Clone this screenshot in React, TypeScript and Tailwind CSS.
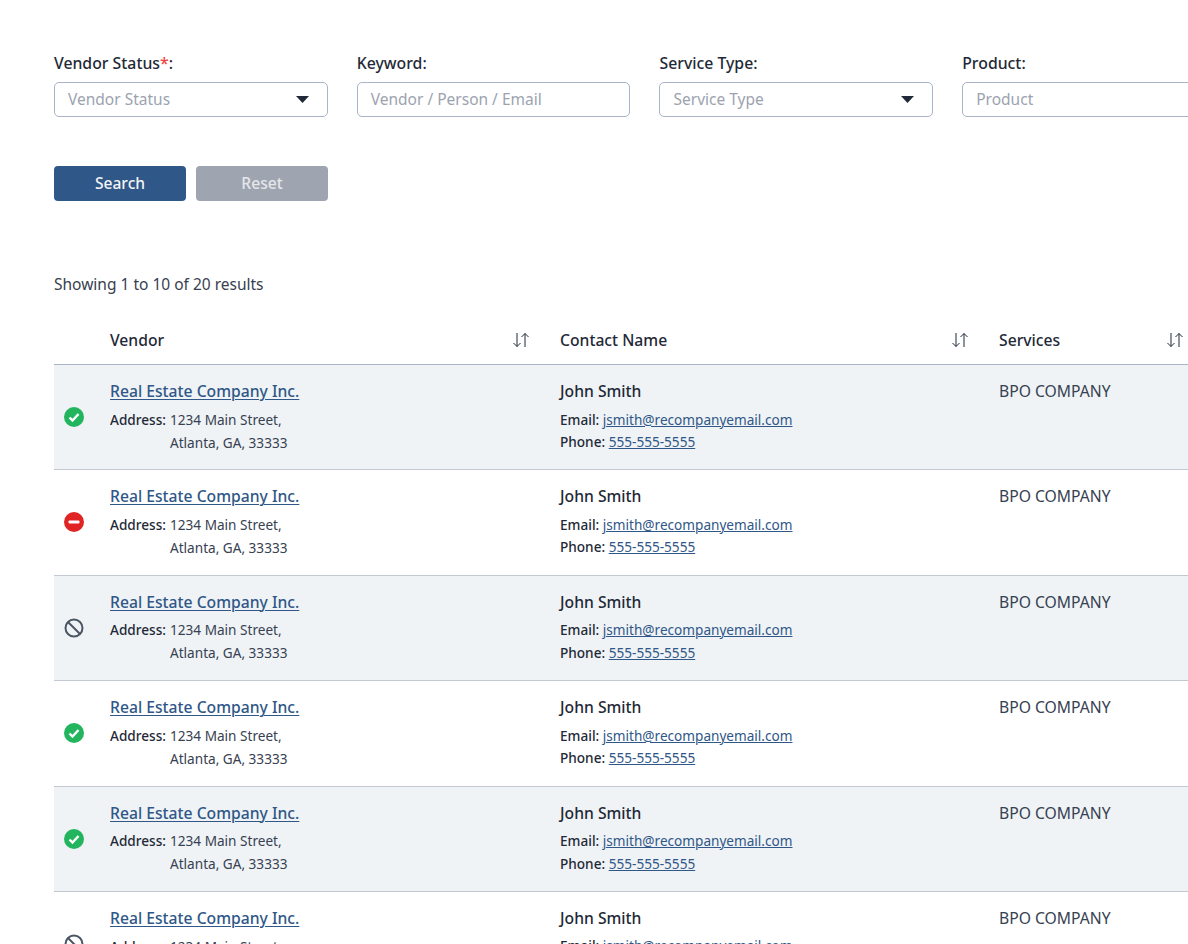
const rows = ['ok', 'blocked', 'none', 'ok', 'ok', 'none'];

function StatusIcon({ status }: { status: string }) {
  if (status === 'ok') {
    return (
      <svg width="20" height="20" viewBox="0 0 20 20">
        <circle cx="10" cy="10" r="10" fill="#22b55e" />
        <path d="M5.5 10.500l3 3 6-6.500" fill="none" stroke="#fff" strokeWidth="2.400" />
      </svg>
    );
  }
  if (status === 'blocked') {
    return (
      <svg width="20" height="20" viewBox="0 0 20 20">
        <circle cx="10" cy="10" r="10" fill="#e02424" />
        <rect x="4.500" y="8.600" width="11" height="2.800" rx="1" fill="#fff" />
      </svg>
    );
  }
  return (
    <svg width="20" height="20" viewBox="0 0 20 20" fill="none" stroke="#4b5563" strokeWidth="2">
      <circle cx="10" cy="10" r="8.500" />
      <path d="M4 4l12 12" />
    </svg>
  );
}

function SortIcon() {
  return (
    <svg width="16" height="16" viewBox="0 0 16 16" fill="none" stroke="#1f2937" strokeWidth="1">
      <path d="M4 1v13.500M0.500 11L4 14.500 7.500 11" />
      <path d="M12 15V1.500M8.500 5L12 1.500 15.500 5" />
    </svg>
  );
}

function Label({ text, required }: { text: string; required?: boolean }) {
  return (
    <div className="mb-[8px] h-[21px] text-[15.8px] leading-[21px] font-medium text-[#1f2937]">
      {text}
      {required && <span className="text-[#ef4444]">*</span>}:
    </div>
  );
}

function Field({ text, select }: { text: string; select?: boolean }) {
  return (
    <div className="flex h-[35px] items-center justify-between rounded-[5px] border border-[#a9b4c8] bg-white pl-[13px] pr-[18px] text-[15.5px] text-[#9ca3af]">
      <span>{text}</span>
      {select && (
        <svg width="13" height="7" viewBox="0 0 13 7">
          <path d="M0 0h13L6.500 7z" fill="#1f2937" />
        </svg>
      )}
    </div>
  );
}

export default function App() {
  return (
    <div className="h-[944px] w-[1188px] overflow-hidden bg-white pl-[54px] pt-[53px] font-['Noto_Sans',sans-serif] text-[#1f2937]">
      <div className="grid w-[1181.8px] grid-cols-4 gap-x-[29.2px]">
        <div>
          <Label text="Vendor Status" required />
          <Field text="Vendor Status" select />
        </div>
        <div>
          <Label text="Keyword" />
          <Field text="Vendor / Person / Email" />
        </div>
        <div>
          <Label text="Service Type" />
          <Field text="Service Type" select />
        </div>
        <div>
          <Label text="Product" />
          <Field text="Product" />
        </div>
      </div>

      <div className="mt-[49px] flex gap-[10px]">
        <button className="h-[35px] w-[132px] rounded-[4px] bg-[#2f5787] text-[15.6px] font-medium text-[#f3f4f6]">Search</button>
        <button className="h-[35px] w-[132px] rounded-[4px] bg-[#9ea5b0] text-[15.6px] font-medium text-[#e5e7eb]">Reset</button>
      </div>

      <div className="mt-[72px] text-[15.5px] leading-[22px] text-[#374151]">Showing 1 to 10 of 20 results</div>

      <div className="mt-[26px] w-[1180px]">
        <div className="grid h-[44px] grid-cols-[56px_450px_439px_1fr] border-b border-[#a9b4c8] text-[15.7px] font-medium leading-[22px]">
          <div />
          <div className="flex items-start justify-between pr-[31px] pt-[8px]">
            <span>Vendor</span>
            <span className="pt-[3px]"><SortIcon /></span>
          </div>
          <div className="flex items-start justify-between pr-[31px] pt-[8px]">
            <span>Contact Name</span>
            <span className="pt-[3px]"><SortIcon /></span>
          </div>
          <div className="flex items-start justify-between pr-[51px] pt-[8px]">
            <span>Services</span>
            <span className="pt-[3px]"><SortIcon /></span>
          </div>
        </div>

        {rows.map((status, i) => (
          <div
            key={i}
            className={`grid h-[105.4px] grid-cols-[56px_450px_439px_1fr] border-b border-[#c3c9d2] ${i % 2 === 0 ? 'bg-[#eff3f6]' : 'bg-white'}`}
          >
            <div className="flex items-start pl-[10px] pt-[42px]">
              <StatusIcon status={status} />
            </div>
            <div className="pt-[15px]">
              <a className="block text-[15.7px] font-medium leading-[22px] text-[#2f5787] underline decoration-1 underline-offset-2">Real Estate Company Inc.</a>
              <div className="mt-[5.7px] flex text-[13.6px] leading-[23px]">
                <span className="w-[60px] font-medium">Address:</span>
                <span className="text-[#374151]">
                  1234 Main Street,
                  <br />
                  Atlanta, GA, 33333
                </span>
              </div>
            </div>
            <div className="pt-[15px]">
              <div className="text-[15.7px] font-medium leading-[22px]">John Smith</div>
              <div className="mt-[6.5px] text-[13.6px] leading-[22.5px]">
                <div>
                  <span className="font-medium">Email: </span>
                  <a className="text-[#2f5787] underline decoration-1">jsmith@recompanyemail.com</a>
                </div>
                <div>
                  <span className="font-medium">Phone: </span>
                  <a className="text-[#2f5787] underline decoration-1">555-555-5555</a>
                </div>
              </div>
            </div>
            <div className="pt-[15px] text-[15.7px] leading-[22px] text-[#374151]">BPO COMPANY</div>
          </div>
        ))}
      </div>
    </div>
  );
}
